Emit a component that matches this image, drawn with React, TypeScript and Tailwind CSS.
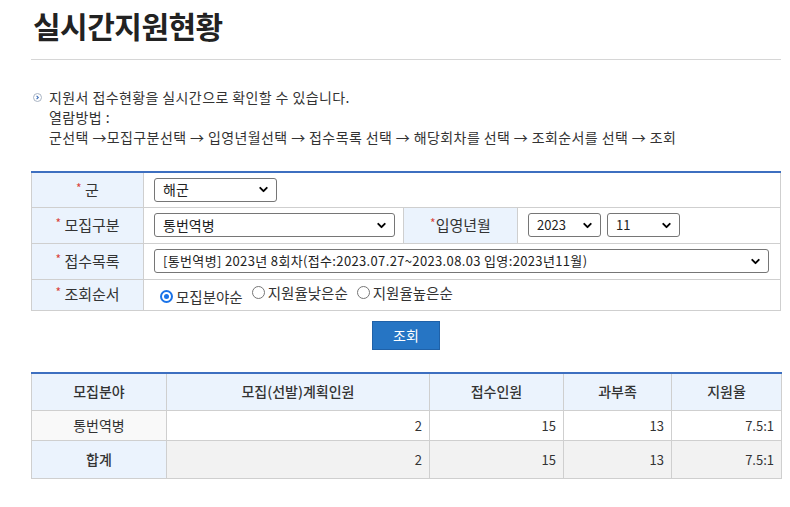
import { ChevronDown } from 'lucide-react'

const font = { fontFamily: '"Noto Sans CJK KR", "Noto Sans", sans-serif' }

function Select({ value, width, size = 'text-[14px]' }: { value: string; width: string; size?: string }) {
  return (
    <div className={`relative inline-flex items-center h-[24px] border border-[#767676] rounded-[3px] bg-white ${width}`}>
      <span className={`pl-[8px] text-[#222] truncate pr-[22px] ${size}`}>{value}</span>
      <ChevronDown className="absolute right-[6px] h-[13px] w-[13px] text-black" strokeWidth={3.5} />
    </div>
  )
}

function Label({ text, compact }: { text: string; compact?: boolean }) {
  return (
    <td className="bg-[#ebf3fd] border border-[#cfcfcf] text-center text-[15px] text-[#333]">
      <span className="text-[#d9443c] text-[12px] align-top">*</span>
      {compact ? '' : ' '}
      {text}
    </td>
  )
}

function Radio({ label, checked }: { label: string; checked?: boolean }) {
  return (
    <label className="inline-flex items-center gap-[3px] mr-[9px]">
      {checked ? (
        <span className="h-[13px] w-[13px] rounded-full border-[2px] border-[#1a73e8] flex items-center justify-center">
          <span className="h-[5px] w-[5px] rounded-full bg-[#1a73e8]" />
        </span>
      ) : (
        <span className="h-[13px] w-[13px] rounded-full border border-[#767676]" />
      )}
      <span>{label}</span>
    </label>
  )
}

export default function App() {
  const cols = ['w-[135px]', 'w-[263px]', 'w-[134px]', 'w-[108px]', 'w-[110px]']
  return (
    <div className="bg-white min-h-[507px] text-[#333]" style={font}>
      <div className="ml-[31px] w-[750px]">
        <h1 className="pt-[5px] pl-[2px] text-[30px] font-bold text-[#222] leading-[40px] tracking-[-0.5px]">
          실시간지원현황
        </h1>
        <div className="mt-[14px] h-px bg-[#d6d6d6]" />

        <div className="mt-[27px] flex text-[14px] tracking-[0.4px] leading-[20px] text-[#333]">
          <svg className="mt-[6px] mr-[7px] ml-[2px] shrink-0" width="9" height="9" viewBox="0 0 9 9">
            <circle cx="4.5" cy="4.5" r="4" fill="#fff" stroke="#a8b3c2" strokeWidth="1" />
            <path d="M3.6 2.8 L5.3 4.5 L3.6 6.2" fill="none" stroke="#3f6fb8" strokeWidth="1.1" />
          </svg>
          <div>
            <p>지원서 접수현황을 실시간으로 확인할 수 있습니다.</p>
            <p>열람방법 :</p>
            <p>군선택 →모집구분선택 → 입영년월선택 → 접수목록 선택 → 해당회차를 선택 → 조회순서를 선택 → 조회</p>
          </div>
        </div>

        <table className="mt-[24px] w-full border-collapse border-t-2 border-t-[#3d6fc0] text-[14px]">
          <colgroup>
            <col className="w-[112px]" />
            <col className="w-[260px]" />
            <col className="w-[114px]" />
            <col />
          </colgroup>
          <tbody>
            <tr className="h-[35px]">
              <Label text="군" />
              <td colSpan={3} className="border border-[#cfcfcf] pl-[10px]">
                <Select value="해군" width="w-[123px]" />
              </td>
            </tr>
            <tr className="h-[36px]">
              <Label text="모집구분" />
              <td className="border border-[#cfcfcf] pl-[10px]">
                <Select value="통번역병" width="w-[241px]" />
              </td>
              <Label text="입영년월" compact />
              <td className="border border-[#cfcfcf] pl-[10px]">
                <div className="flex gap-[6px]">
                  <Select value="2023" width="w-[73px]" size="text-[13px]" />
                  <Select value="11" width="w-[73px]" size="text-[13px]" />
                </div>
              </td>
            </tr>
            <tr className="h-[36px]">
              <Label text="접수목록" />
              <td colSpan={3} className="border border-[#cfcfcf] pl-[10px] pr-[11px]">
                <Select
                  value="[통번역병] 2023년 8회차(접수:2023.07.27~2023.08.03 입영:2023년11월)"
                  width="w-full"
                  size="text-[13px] tracking-[0.35px]"
                />
              </td>
            </tr>
            <tr className="h-[31px]">
              <Label text="조회순서" />
              <td colSpan={3} className="border border-[#cfcfcf] pl-[16px] text-[14.5px] text-[#333]">
                <Radio label="모집분야순" checked />
                <Radio label="지원율낮은순" />
                <Radio label="지원율높은순" />
              </td>
            </tr>
          </tbody>
        </table>

        <div className="mt-[10px] flex justify-center">
          <button className="h-[29px] w-[68px] bg-[#2675c4] border border-[#1f61a8] text-white text-[14px]">
            조회
          </button>
        </div>

        <table className="mt-[22px] w-full border-collapse border-t-2 border-t-[#3d6fc0] text-[13px] table-fixed">
          <colgroup>
            {cols.map((c, i) => (
              <col key={i} className={c} />
            ))}
          </colgroup>
          <thead>
            <tr className="h-[38px] bg-[#ebf3fd]">
              {['모집분야', '모집(선발)계획인원', '접수인원', '과부족', '지원율'].map((h) => (
                <th key={h} className="border border-[#cfcfcf] font-medium text-[14px] text-[#333]">
                  {h}
                </th>
              ))}
            </tr>
          </thead>
          <tbody>
            <tr className="h-[30px]">
              <td className="border border-[#cfcfcf] bg-[#f9f9f9] text-center text-[14px]">통번역병</td>
              {['2', '15', '13', '7.5:1'].map((v, i) => (
                <td key={i} className="border border-[#cfcfcf] text-right pr-[7px]">
                  {v}
                </td>
              ))}
            </tr>
            <tr className="h-[38px] bg-[#f2f2f2]">
              <td className="border border-[#cfcfcf] bg-[#ebf3fd] text-center font-medium text-[14px]">합계</td>
              {['2', '15', '13', '7.5:1'].map((v, i) => (
                <td key={i} className="border border-[#cfcfcf] text-right pr-[7px]">
                  {v}
                </td>
              ))}
            </tr>
          </tbody>
        </table>
      </div>
    </div>
  )
}
